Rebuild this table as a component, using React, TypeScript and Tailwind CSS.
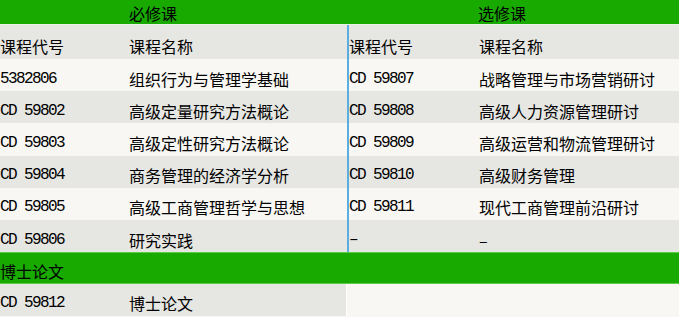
const required = [
  { code: "5382806", name: "组织行为与管理学基础" },
  { code: "CD 59802", name: "高级定量研究方法概论" },
  { code: "CD 59803", name: "高级定性研究方法概论" },
  { code: "CD 59804", name: "商务管理的经济学分析" },
  { code: "CD 59805", name: "高级工商管理哲学与思想" },
  { code: "CD 59806", name: "研究实践" },
];

const electives = [
  { code: "CD 59807", name: "战略管理与市场营销研讨" },
  { code: "CD 59808", name: "高级人力资源管理研讨" },
  { code: "CD 59809", name: "高级运营和物流管理研讨" },
  { code: "CD 59810", name: "高级财务管理" },
  { code: "CD 59811", name: "现代工商管理前沿研讨" },
  { code: "–", name: "–" },
];

const cjk = "font-['Noto_Sans_CJK_SC',sans-serif] text-[16px]";
const mono = "font-['Liberation_Mono','Noto_Sans_CJK_SC',monospace] text-[16px] tracking-[-1.6px]";

function Row({ code, name, odd, codeW }: { code: string; name: string; odd: boolean; codeW: string }) {
  return (
    <div className={`flex items-center h-[32.2px] pt-[7px] ${odd ? "bg-[#e6e6e2]" : "bg-[#f8f7f3]"}`}>
      <div className={`${mono} ${codeW} shrink-0`}>{code}</div>
      <div className={cjk}>{name}</div>
    </div>
  );
}

export default function App() {
  return (
    <div className="w-[679px] h-[317px] bg-[#f8f7f3] text-black overflow-hidden">
      <div className="flex h-[25px] bg-[#19aa00] border-b border-[#e9f3e4] pt-[2px]">
        <div className={`w-[347px] pl-[129px] ${cjk} leading-[22px]`}>必修课</div>
        <div className={`flex-1 pl-[131px] ${cjk} leading-[22px]`}>选修课</div>
      </div>

      <div className="flex">
        <div className="w-[347px]">
          <div className="flex items-center h-[34px] pt-[7px] bg-[#e6e6e2]">
            <div className={`${cjk} w-[129px]`}>课程代号</div>
            <div className={cjk}>课程名称</div>
          </div>
          {required.map((r, i) => (
            <Row key={r.code} code={r.code} name={r.name} odd={i % 2 === 1} codeW="w-[129px]" />
          ))}
        </div>
        <div className="flex-1 border-l-2 border-[#5aaee0]">
          <div className="flex items-center h-[34px] pt-[7px] bg-[#e6e6e2]">
            <div className={`${cjk} w-[130px]`}>课程代号</div>
            <div className={cjk}>课程名称</div>
          </div>
          {electives.map((r, i) => (
            <Row key={r.code + i} code={r.code} name={r.name} odd={i % 2 === 1} codeW="w-[130px]" />
          ))}
        </div>
      </div>

      <div className={`h-[32px] bg-[#19aa00] border-y border-[#5fcb4a] flex items-center pt-[6px] ${cjk}`}>博士论文</div>

      <div className="flex h-[32px]">
        <div className="w-[347px] bg-[#e6e6e2] flex items-center pt-[6px] border-r border-white">
          <div className={`${mono} w-[129px]`}>CD 59812</div>
          <div className={cjk}>博士论文</div>
        </div>
        <div className="flex-1 bg-[#f8f7f3]" />
      </div>
    </div>
  );
}
